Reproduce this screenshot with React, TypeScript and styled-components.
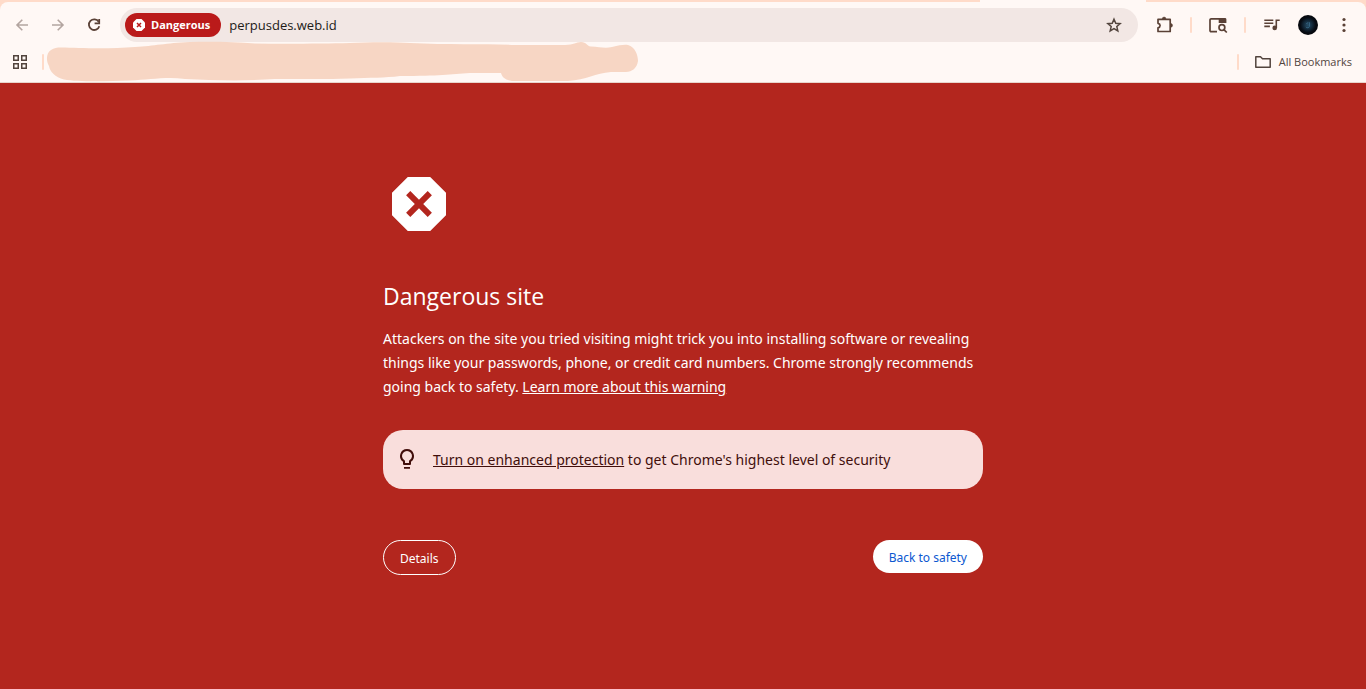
import React from "react";
import styled, { createGlobalStyle } from "styled-components";

const GlobalStyle = createGlobalStyle`
  * { box-sizing: border-box; }
  body {
    margin: 0;
    background: #b3261e;
    font-family: "Segoe UI", "Open Sans", "Noto Sans", sans-serif;
  }
  button, input { font-family: inherit; }
`;

const Page = styled.div`
  min-height: 100vh;
  display: flex;
  flex-direction: column;
`;

const BrowserChrome = styled.header`
  background: #ffdbc9;
`;

const TabStrip = styled.div`
  height: 2px;
  display: flex;
  justify-content: flex-end;
  padding-right: 220px;
`;

const ActiveTab = styled.div`
  width: 166px;
  background: #fff8f5;
`;

const Toolbar = styled.div`
  display: flex;
  align-items: center;
  gap: 2px;
  height: 46px;
  padding: 0 5px;
  background: #fff8f5;
  border-radius: 8px 8px 0 0;
`;

const IconButton = styled.button<{ $tone?: string }>`
  display: flex;
  align-items: center;
  justify-content: center;
  flex: none;
  width: 34px;
  height: 34px;
  padding: 0;
  border: 0;
  border-radius: 50%;
  background: transparent;
  color: ${(p) => p.$tone ?? "#5a4136"};
`;

const Separator = styled.span<{ $gap?: number }>`
  flex: none;
  width: 2px;
  height: 16px;
  margin: 0 ${(p) => p.$gap ?? 7}px;
  border-radius: 1px;
  background: #ffdbc9;
`;

const Omnibox = styled.form`
  flex: 1;
  min-width: 0;
  display: flex;
  align-items: center;
  height: 34px;
  margin: 0 7px;
  padding: 0 7px 0 5px;
  border-radius: 17px;
  background: #f2e7e4;
`;

const DangerChip = styled.button`
  display: flex;
  align-items: center;
  flex: none;
  gap: 6px;
  height: 24px;
  padding: 0 11px 0 8px;
  border: 0;
  border-radius: 12px;
  background: #ba1a1a;
  color: #fff;
  font-size: 11px;
  line-height: 16px;
  font-weight: 700;
`;

const AddressInput = styled.input`
  flex: 1;
  min-width: 0;
  padding: 0 8px;
  border: 0;
  outline: 0;
  background: transparent;
  color: #221a17;
  font-size: 13px;
  line-height: 20px;
`;

const BookmarkBar = styled.div`
  position: relative;
  display: flex;
  align-items: center;
  height: 35px;
  padding: 0 14px 6px 3px;
  border-bottom: 1px solid #e8d5cc;
  background: #fff8f5;
`;

const Scribble = styled.svg`
  position: absolute;
  left: 46px;
  top: -7px;
  pointer-events: none;
`;

const Spacer = styled.div`
  flex: 1;
`;

const BookmarkFolder = styled.button`
  display: flex;
  align-items: center;
  gap: 8px;
  padding: 0;
  border: 0;
  background: transparent;
  color: #52443d;
  font-size: 11px;
  line-height: 16px;
`;

const Warning = styled.main`
  width: 100%;
  max-width: 600px;
  margin: 0 auto;
  padding: 85px 0 40px;
  color: #fff;
`;

const WarningIcon = styled.svg`
  display: block;
  width: 72px;
  height: 72px;
`;

const Title = styled.h1`
  margin: 40px 0 14px;
  font-size: 23px;
  line-height: 33px;
  font-weight: 400;
`;

const Message = styled.p`
  margin: 0;
  font-family: "Segoe UI", "Noto Sans", "Open Sans", sans-serif;
  font-size: 14px;
  line-height: 24px;
`;

const TextLink = styled.a`
  color: inherit;
  text-decoration: underline;
`;

const Tip = styled.div`
  display: flex;
  align-items: center;
  gap: 14px;
  min-height: 59px;
  margin: 31px 0 51px;
  padding: 0 12px;
  border-radius: 20px;
  background: #f9dedc;
  color: #410e0b;
  font-family: "Segoe UI", "Noto Sans", "Open Sans", sans-serif;
  font-size: 14px;
  line-height: 24px;
`;

const Actions = styled.div`
  display: flex;
  align-items: flex-start;
  justify-content: space-between;
`;

const ActionButton = styled.button<{ $primary?: boolean }>`
  padding: 9px 16px 7px;
  border: ${(p) => (p.$primary ? "0" : "1px solid #fff")};
  border-radius: 20px;
  background: ${(p) => (p.$primary ? "#fff" : "transparent")};
  color: ${(p) => (p.$primary ? "#0b57d0" : "#fff")};
  font-family: "Segoe UI", "Noto Sans", "Open Sans", sans-serif;
  font-size: 12px;
  line-height: 17px;
`;

const Glyph = ({ d, size = 20 }: { d: string; size?: number }) => (
  <svg width={size} height={size} viewBox={`0 0 ${size} ${size}`} fill="none" stroke="currentColor" strokeWidth="1.6" aria-hidden="true">
    <path d={d} />
  </svg>
);

const ReloadIcon = () => (
  <svg width="20" height="20" viewBox="0 0 20 20" fill="none" stroke="currentColor" strokeWidth="1.8" aria-hidden="true">
    <path d="M14.7 6.8A5.3 5.3 0 1 0 15.3 11.2" />
    <path d="M15.2 4v4.4h-4.6" />
  </svg>
);

const ExtensionIcon = () => (
  <svg width="20" height="20" viewBox="0 0 20 20" aria-hidden="true">
    <path
      d="M4 4.4h12.2v12.1H4v-3.7c2.8-.6 2.8-3.9 0-4.500z"
      fill="none"
      stroke="currentColor"
      strokeWidth="1.7"
      strokeLinejoin="round"
    />
    <path d="M8.300 3.900a1.800 1.800 0 0 1 3.600 0zM16.700 8.600a1.800 1.800 0 0 1 0 3.600z" fill="currentColor" stroke="currentColor" strokeWidth=".6" />
  </svg>
);

const SearchPanelIcon = () => (
  <svg width="20" height="20" viewBox="0 0 20 20" fill="none" stroke="currentColor" strokeWidth="1.7" aria-hidden="true">
    <path d="M9 16.600H3.100a1.100 1.100 0 0 1-1.100-1.100V5a1.100 1.100 0 0 1 1.100-1.100h8" />
    <path d="M10.700 3.100H17a1.400 1.400 0 0 1 1.400 1.400V8h-7.700z" fill="currentColor" stroke="none" />
    <circle cx="13.900" cy="12.600" r="2.900" />
    <path d="m15.900 14.600 2.900 2.900" />
  </svg>
);

const QueueMusicIcon = () => (
  <svg width="20" height="20" viewBox="0 0 20 20" fill="none" stroke="currentColor" strokeWidth="1.6" aria-hidden="true">
    <path d="M2.3 5.2h9M2.3 8.3h9M2.3 11.4h5.6M14.3 13V5.2h3.4" />
    <circle cx="12.7" cy="12.9" r="2.3" fill="currentColor" stroke="none" />
  </svg>
);

const AvatarIcon = () => (
  <svg width="20" height="20" viewBox="0 0 20 20" aria-hidden="true">
    <defs>
      <radialGradient id="avatar-glow">
        <stop offset="0" stopColor="#28506a" />
        <stop offset=".4" stopColor="#142c3e" />
        <stop offset=".75" stopColor="#070c14" />
        <stop offset="1" stopColor="#05070b" />
      </radialGradient>
    </defs>
    <circle cx="10" cy="10" r="10" fill="url(#avatar-glow)" />
    <path d="M11.500 7.300v3.900a2 2 0 0 1-3.600.7M8.300 8.600l2-1" fill="none" stroke="#35637f" strokeWidth="1" />
  </svg>
);

const App = () => (
  <Page>
    <GlobalStyle />
    <BrowserChrome>
      <TabStrip>
        <ActiveTab />
      </TabStrip>
      <Toolbar>
        <IconButton aria-label="Back" $tone="#b3a5a0">
          <Glyph d="M16 10H5M10.3 4.7 5 10l5.3 5.3" />
        </IconButton>
        <IconButton aria-label="Forward" $tone="#b3a5a0">
          <Glyph d="M4 10h11M9.7 4.7 15 10l-5.3 5.3" />
        </IconButton>
        <IconButton aria-label="Reload">
          <ReloadIcon />
        </IconButton>
        <Omnibox>
          <DangerChip type="button">
            <svg width="12" height="12" viewBox="0 0 12 12" aria-hidden="true">
              <path d="M3.5 0h5L12 3.5v5L8.500 12h-5L0 8.500v-5z" fill="#fff" stroke="none" />
              <path d="m4 4 4 4M8 4 4 8" stroke="#ba1a1a" strokeWidth="1.500" />
            </svg>
            Dangerous
          </DangerChip>
          <AddressInput aria-label="Address" defaultValue="perpusdes.web.id" spellCheck={false} />
          <IconButton type="button" aria-label="Bookmark this tab" $tone="#52443d">
            <svg width="20" height="20" viewBox="0 0 20 20" fill="none" stroke="currentColor" strokeWidth="1.500" aria-hidden="true">
              <path d="m10 4.200 1.750 4.050 4.400.4-3.330 2.900 1 4.300L10 13.550l-3.820 2.300 1-4.300-3.330-2.900 4.400-.4z" />
            </svg>
          </IconButton>
        </Omnibox>
        <IconButton aria-label="Extensions">
          <ExtensionIcon />
        </IconButton>
        <Separator />
        <IconButton aria-label="Search side panel">
          <SearchPanelIcon />
        </IconButton>
        <Separator />
        <IconButton aria-label="Media controls">
          <QueueMusicIcon />
        </IconButton>
        <IconButton aria-label="Profile">
          <AvatarIcon />
        </IconButton>
        <IconButton aria-label="Menu">
          <svg width="20" height="20" viewBox="0 0 20 20" fill="currentColor" aria-hidden="true">
            <circle cx="10" cy="4.500" r="1.600" />
            <circle cx="10" cy="10" r="1.600" />
            <circle cx="10" cy="15.500" r="1.600" />
          </svg>
        </IconButton>
      </Toolbar>
      <BookmarkBar>
        <IconButton aria-label="Apps" $tone="#52443d">
          <svg width="14" height="14" viewBox="0 0 14 14" fill="none" stroke="currentColor" strokeWidth="1.500" aria-hidden="true">
            <path d="M.75.75h4.500v4.500H.75zM8.750.75h4.500v4.500h-4.500zM.75 8.750h4.500v4.500H.75zM8.750 8.750h4.500v4.500h-4.500z" />
          </svg>
        </IconButton>
        <Separator $gap={5} />
        <Scribble width="594" height="41" viewBox="46 41 594 41" aria-hidden="true">
          <path
            d="M61 47.500C80 48 110 49 135 47C155 46 165 43 190 42C215 41.500 235 42 255 43.500C290 44 325 43.500 350 43C370 42 395 42 410 43C450 45 485 43.500 515 45H565C574 45 576 42 581 42C587 42 586 46 591 46.500C600 47 605 48.500 612 47C620 45 624 44.500 628 45C635 47 638 55 638 61C637 68 632 72 626 72H611C595 73 587 80 568 81H512C505 80 502 77 501 73H470C450 74.500 440 76 400 76C385 78 370 77.500 350 78.500C310 80 285 78 265 79.500C235 81.500 210 80 185 79C165 76.500 150 80 130 80.500C105 81.500 78 82 64 79.500C55 77 50 72 49 66C46 61 46 53 51 50C54 48 57 47.500 61 47.500Z"
            fill="#f7d6c4"
          />
        </Scribble>
        <Spacer />
        <Separator $gap={16} />
        <BookmarkFolder>
          <svg width="16" height="14" viewBox="0 0 16 14" fill="none" stroke="currentColor" strokeWidth="1.500" strokeLinejoin="round" aria-hidden="true">
            <path d="M.8 1.800h4.700l2 2h7.700v8.400H.8z" />
          </svg>
          All Bookmarks
        </BookmarkFolder>
      </BookmarkBar>
    </BrowserChrome>
    <Warning>
      <WarningIcon viewBox="0 0 24 24" aria-hidden="true">
        <path
          fill="#fff"
          fillRule="evenodd"
          d="M15.730 3H8.270L3 8.270v7.460L8.270 21h7.460L21 15.730V8.270zM16.300 14.900l-1.400 1.400L12 13.400l-2.900 2.900-1.400-1.400L10.600 12 7.700 9.100l1.400-1.400L12 10.600l2.900-2.900 1.400 1.400L13.400 12z"
        />
      </WarningIcon>
      <Title>Dangerous site</Title>
      <Message>
        Attackers on the site you tried visiting might trick you into installing software or revealing things like your
        passwords, phone, or credit card numbers. Chrome strongly recommends going back to safety.{" "}
        <TextLink href="#learn-more">Learn more about this warning</TextLink>
      </Message>
      <Tip>
        <svg width="24" height="24" viewBox="0 0 24 24" fill="currentColor" aria-hidden="true">
          <path d="M9 19h6v1.700H9zM12 1a7 7 0 0 0-4 12.740V16a1 1 0 0 0 1 1h6a1 1 0 0 0 1-1v-2.260A7 7 0 0 0 12 1zm2.850 11.100-.85.6V15h-4v-2.300l-.85-.6A5 5 0 1 1 14.850 12.100z" />
        </svg>
        <span>
          <TextLink href="#enhanced-protection">Turn on enhanced protection</TextLink> to get Chrome's highest level of
          security
        </span>
      </Tip>
      <Actions>
        <ActionButton>Details</ActionButton>
        <ActionButton $primary>Back to safety</ActionButton>
      </Actions>
    </Warning>
  </Page>
);

export default App;
